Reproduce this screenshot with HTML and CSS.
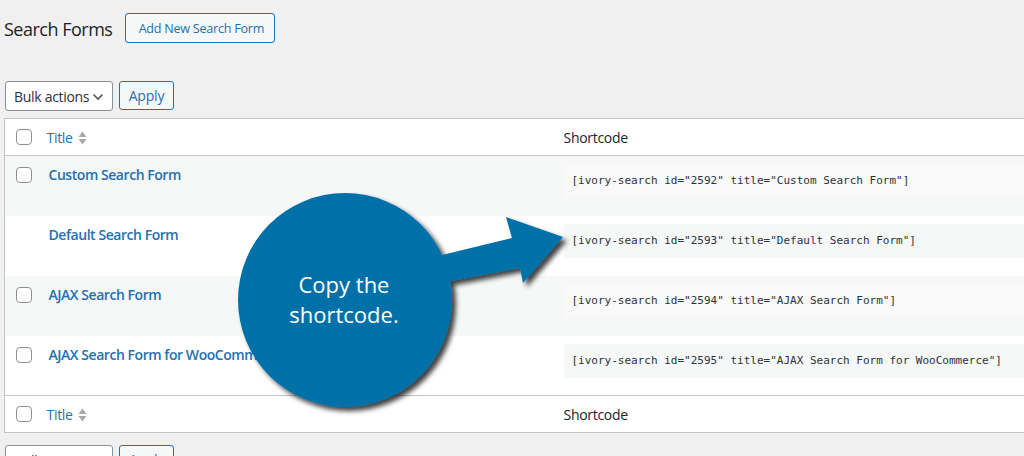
FILE: index.html
```html
<!DOCTYPE html>
<html>
<head>
<meta charset="utf-8">
<link rel="stylesheet" href="styles.css">
</head>
<body>
<div class="wrap">
  <div class="page-head">
    <h1 class="page-title">Search Forms</h1>
    <a class="btn btn-add">Add New Search Form</a>
  </div>

  <div class="tablenav top">
    <div class="select">Bulk actions <svg class="chev" width="12" height="8" viewBox="0 0 12 8"><path d="M1.5 1.5 L6 6 L10.5 1.5" fill="none" stroke="#50575e" stroke-width="1.6"/></svg></div>
    <a class="btn btn-apply">Apply</a>
  </div>

  <table class="list">
    <thead>
      <tr class="head-row">
        <td class="cb"><span class="check"></span></td>
        <th class="col-title"><a class="sort-link">Title <svg class="sort" width="9" height="14" viewBox="0 0 9 14"><path d="M4.5 0.5 L8.5 6 L0.5 6 Z M0.5 8 L8.5 8 L4.5 13.5 Z" fill="#a7aaad"/></svg></a></th>
        <th class="col-code">Shortcode</th>
      </tr>
    </thead>
    <tbody>
      <tr class="alt">
        <td class="cb"><span class="check"></span></td>
        <td class="title-cell"><a class="row-title">Custom Search Form</a></td>
        <td class="code-cell"><code>[ivory-search id="2592" title="Custom Search Form"]</code></td>
      </tr>
      <tr>
        <td class="cb"></td>
        <td class="title-cell"><a class="row-title">Default Search Form</a></td>
        <td class="code-cell"><code>[ivory-search id="2593" title="Default Search Form"]</code></td>
      </tr>
      <tr class="alt">
        <td class="cb"><span class="check"></span></td>
        <td class="title-cell"><a class="row-title">AJAX Search Form</a></td>
        <td class="code-cell"><code>[ivory-search id="2594" title="AJAX Search Form"]</code></td>
      </tr>
      <tr class="last">
        <td class="cb"><span class="check"></span></td>
        <td class="title-cell"><a class="row-title">AJAX Search Form for WooCommerce</a></td>
        <td class="code-cell"><code>[ivory-search id="2595" title="AJAX Search Form for WooCommerce"]</code></td>
      </tr>
    </tbody>
    <tfoot>
      <tr class="head-row foot-row">
        <td class="cb"><span class="check"></span></td>
        <th class="col-title"><a class="sort-link">Title <svg class="sort" width="9" height="14" viewBox="0 0 9 14"><path d="M4.5 0.5 L8.5 6 L0.5 6 Z M0.5 8 L8.5 8 L4.5 13.5 Z" fill="#a7aaad"/></svg></a></th>
        <th class="col-code">Shortcode</th>
      </tr>
    </tfoot>
  </table>

  <div class="tablenav bottom">
    <div class="select">Bulk actions <svg class="chev" width="12" height="8" viewBox="0 0 12 8"><path d="M1.5 1.5 L6 6 L10.5 1.5" fill="none" stroke="#50575e" stroke-width="1.6"/></svg></div>
    <a class="btn btn-apply">Apply</a>
  </div>
</div>

<svg class="callout" width="1024" height="456" viewBox="0 0 1024 456">
  <defs>
    <filter id="sh" x="-20%" y="-20%" width="140%" height="140%">
      <feDropShadow dx="4" dy="4" stdDeviation="2.5" flood-color="#000" flood-opacity="0.75"/>
    </filter>
  </defs>
  <g filter="url(#sh)" fill="#0171a8">
    <path d="M438 256 L512 238 L506 217 L563 237 L523 283 L520 268 L446 282 Z"/>
    <circle cx="345" cy="300" r="107"/>
  </g>
  <text class="callout-text" x="344" y="293" text-anchor="middle">Copy the</text>
  <text class="callout-text" x="344" y="323" text-anchor="middle">shortcode.</text>
</svg>
</body>
</html>
```

FILE: styles.css
```css
html, body {
  margin: 0;
  padding: 0;
  background: #f0f0f1;
  overflow: hidden;
  width: 1024px;
  height: 456px;
}

body {
  font-family: "Open Sans", "Noto Sans", sans-serif;
  font-size: 13px;
  color: #2c3338;
  position: relative;
}

.wrap {
  padding-left: 4px;
  width: 1080px;
}

.page-head {
  display: flex;
  align-items: center;
  gap: 13px;
  padding-top: 13px;
  height: 30px;
}

.page-title {
  margin: 0;
  font-size: 18px;
  font-weight: 400;
  line-height: 28px;
  color: #1d2327;
  letter-spacing: -0.5px;
  padding-top: 2px;
}

.btn {
  display: inline-flex;
  align-items: center;
  box-sizing: border-box;
  height: 30px;
  padding: 0 10px;
  border: 1px solid #2271b1;
  border-radius: 3px;
  background: #f6f7f7;
  color: #2271b1;
  font-size: 13px;
  letter-spacing: -0.2px;
  white-space: nowrap;
}

.btn-add {
  width: 150px;
  justify-content: center;
  padding: 0 0 0 2px;
  font-size: 12.6px;
  letter-spacing: -0.25px;
}

.tablenav {
  display: flex;
  align-items: flex-start;
  gap: 6px;
}

.tablenav.top {
  margin-top: 38px;
  padding-left: 1px;
}

.tablenav.bottom {
  margin-top: 12px;
  padding-left: 1px;
}

.select {
  box-sizing: border-box;
  width: 108px;
  height: 30px;
  display: flex;
  align-items: center;
  justify-content: space-between;
  padding: 0 8px 0 8px;
  background: #fff;
  border: 1px solid #8c8f94;
  border-radius: 3px;
  font-size: 14px;
  color: #2c3338;
  letter-spacing: -0.3px;
  white-space: nowrap;
}

.chev {
  margin-top: 1px;
}

.btn-apply {
  width: 55px;
  height: 29px;
  justify-content: center;
  padding: 0;
  font-size: 14px;
}

.list {
  margin-top: 7px;
  width: 1060px;
  border-collapse: collapse;
  border: 1px solid #c3c4c7;
  background: #fff;
  table-layout: fixed;
}

.list td, .list th {
  padding: 0;
  vertical-align: top;
  text-align: left;
  font-weight: 400;
}

.cb {
  width: 34px;
  box-sizing: border-box;
  padding-left: 11px !important;
}

.col-title {
  width: 515px;
}

.check {
  display: block;
  box-sizing: border-box;
  width: 16px;
  height: 16px;
  border: 1px solid #8c8f94;
  border-radius: 4px;
  background: #fff;
}

.head-row {
  height: 37px;
  border-bottom: 1px solid #c3c4c7;
}

.head-row td, .head-row th {
  vertical-align: middle;
}

.foot-row {
  border-bottom: none;
  border-top: 1px solid #c3c4c7;
}

.sort-link {
  display: flex;
  align-items: center;
  gap: 5px;
  padding-left: 8px;
  color: #2271b1;
  font-size: 14px;
  letter-spacing: -0.3px;
}

.sort {
  margin-top: 1px;
}

.col-code {
  padding-left: 10px !important;
  font-size: 14px;
  color: #1d2327;
  letter-spacing: -0.3px;
}

tbody tr {
  height: 60px;
}

tbody tr.alt {
  background: #f6f7f7;
}

tbody .cb {
  padding-top: 11px !important;
}

.title-cell {
  padding: 9px 10px 0 10px !important;
  line-height: 20px;
}

.row-title {
  color: #2271b1;
  font-weight: 600;
  font-size: 14px;
  letter-spacing: -0.45px;
}

.code-cell {
  padding: 8px 0 0 10px !important;
}

.code-cell code {
  display: block;
  padding: 9px 8px 10px;
  background: #f9f9f9;
  font-family: "DejaVu Sans Mono", "Liberation Mono", monospace;
  font-size: 11px;
  line-height: 15px;
  color: #2c3338;
}

tbody tr:not(.alt) .code-cell code {
  background: #f6f7f7;
}

.callout {
  position: absolute;
  left: 0;
  top: 0;
  pointer-events: none;
}

.callout-text {
  font-family: "Open Sans", "Noto Sans", sans-serif;
  font-size: 22px;
  fill: #ffffff;
}
```
